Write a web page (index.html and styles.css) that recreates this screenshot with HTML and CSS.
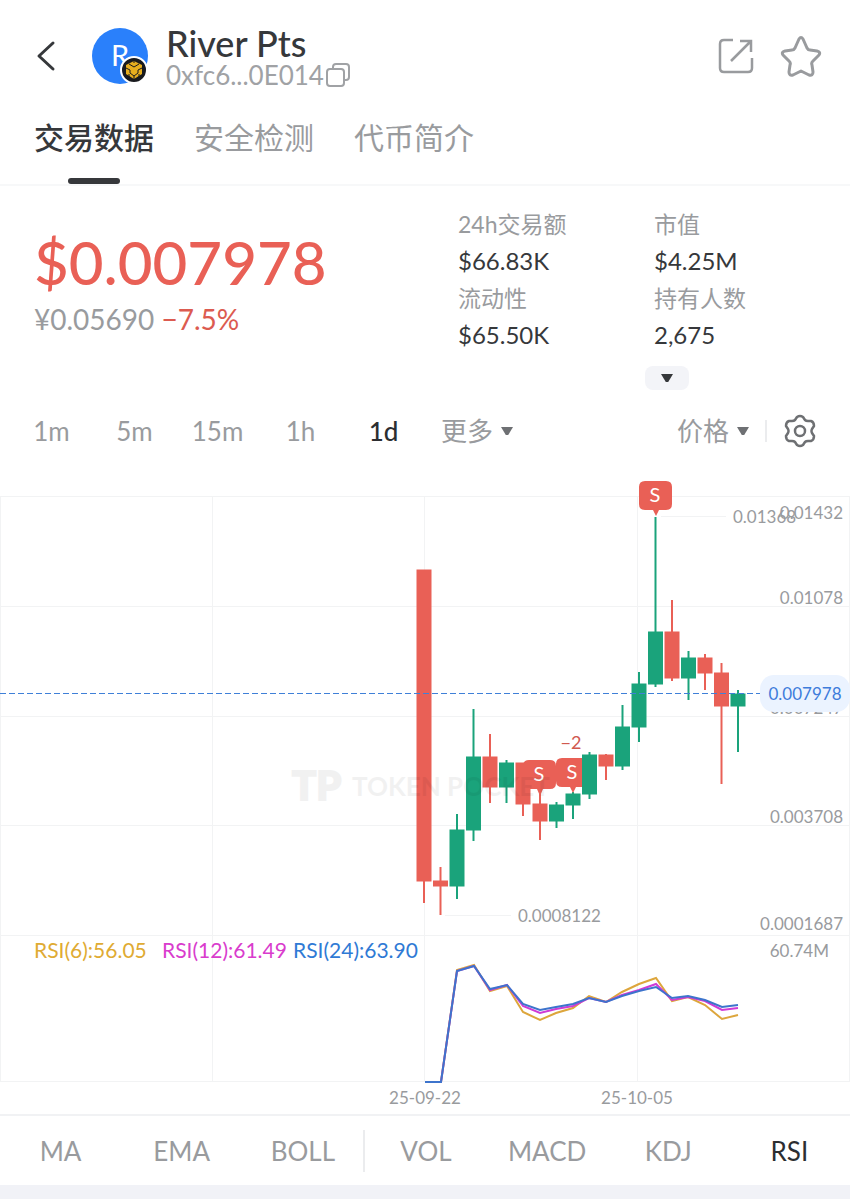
FILE: index.html
```
<!DOCTYPE html>
<html lang="zh-CN">
<head>
    <meta charset="UTF-8">
    <meta name="viewport" content="width=device-width, initial-scale=1.0">
    <title>River Pts</title>
    <link rel="stylesheet" href="styles.css">
</head>
<body>
    <header class="header">
        <button class="icon-btn back" aria-label="返回">
            <svg width="20" height="32" viewBox="0 0 20 32"><path d="M17 3 3 16l14 13" fill="none" stroke="#36383b" stroke-width="3" stroke-linecap="round" stroke-linejoin="round"/></svg>
        </button>
        <div class="avatar">R
            <svg class="chain" width="28" height="28" viewBox="0 0 28 28">
                <circle cx="14" cy="14" r="13" fill="#181a1e" stroke="#fff" stroke-width="2"/>
                <path d="m14 5 8 4v9l-8 5-8-5V9z" fill="#e6ae1e"/>
                <path d="m9 8 5 3 5-3M6 12l4 2v3l4 3 4-3v-3l4-2M14 20v4M9 21v-3M19 21v-3M14 4v3" fill="none" stroke="#181a1e" stroke-width="1"/>
            </svg>
        </div>
        <div class="token">
            <h1>River Pts</h1>
            <div class="address">0xfc6...0E014
                <button class="icon-btn" aria-label="复制">
                    <svg width="24" height="24" viewBox="0 0 24 24" fill="none" stroke="#a0a2a5" stroke-width="2"><rect x="1" y="6" width="17" height="17" rx="3"/><path d="M7 6V4q0-3 3-3h10q3 0 3 3v10q0 3-3 3h-2"/></svg>
                </button>
            </div>
        </div>
        <div class="actions">
            <button class="icon-btn" aria-label="分享">
                <svg width="36" height="36" viewBox="0 0 36 36" fill="none" stroke="#999b9e" stroke-width="2.500"><path d="M15 2H6Q2 2 2 6v24q0 4 4 4h24q4 0 4-4V20M22 3h11v11M33 3 13 23"/></svg>
            </button>
            <button class="icon-btn" aria-label="收藏">
                <svg width="42" height="42" viewBox="0 0 42 42" fill="none" stroke="#999b9e" stroke-width="3" stroke-linejoin="round"><path d="M19 4q2-3 4 0l4 9q1 2 3 2l7 1q4 1 2 4l-6 6q-2 2-1 4l1 7q0 4-4 3l-8-4-8 4q-4 1-4-3l1-7q1-2-1-4l-6-6q-2-3 2-4l7-1q2 0 3-2z"/></svg>
            </button>
        </div>
    </header>

    <nav class="tabs">
        <a href="#" class="active">交易数据</a>
        <a href="#">安全检测</a>
        <a href="#">代币简介</a>
    </nav>

    <section class="summary">
        <div class="price-box">
            <div class="price">$0.007978</div>
            <div class="sub-price">¥0.05690 <span>−7.5%</span></div>
        </div>
        <div class="stats">
            <dl>
                <dt>24h交易额</dt>
                <dd>$66.83K</dd>
                <dt>流动性</dt>
                <dd>$65.50K</dd>
            </dl>
            <dl>
                <dt>市值</dt>
                <dd>$4.25M</dd>
                <dt>持有人数</dt>
                <dd>2,675</dd>
            </dl>
            <button class="expand" aria-label="展开"><i class="caret"></i></button>
        </div>
    </section>

    <div class="periods">
        <button>1m</button>
        <button>5m</button>
        <button>15m</button>
        <button>1h</button>
        <button class="active">1d</button>
        <button class="more">更多<i class="caret"></i></button>
        <button class="type">价格<i class="caret"></i></button>
        <span class="divider"></span>
        <button class="settings" aria-label="设置">
            <svg width="32" height="34" viewBox="0 0 32 34" fill="none" stroke="#6e7073" stroke-width="2.500" stroke-linejoin="round"><path d="M13 3q3-2 6 0l2 3q1 1 3 1l3 0q3 1 3 5l-2 3q-1 2 0 4l2 3q0 4-3 5h-3q-2 0-3 1l-2 3q-3 2-6 0l-2-3q-1-1-3-1H5q-3-1-3-5l2-3q1-2 0-4l-2-3q0-4 3-5h3q2 0 3-1z"/><circle cx="16" cy="17" r="5"/></svg>
        </button>
    </div>

    <svg class="chart" viewBox="0 0 850 640">
        <g class="grid">
            <path d="M0 22.500H850M0 132.500H850M0 242.500H850M0 351.500H850M0 461.500H850M0 607.500H850"/>
            <path d="M.5 22V607M212.500 22V607M424.500 22V607M637.500 22V607M849.500 22V607"/>
            <path d="M661 42.500H726M445 441.500H511"/>
        </g>

        <g class="axis">
            <text x="843" y="45" text-anchor="end">0.01432</text>
            <text x="843" y="130" text-anchor="end">0.01078</text>
            <text x="843" y="240" text-anchor="end">0.007247</text>
            <text x="843" y="349" text-anchor="end">0.003708</text>
            <text x="843" y="456" text-anchor="end">0.0001687</text>
            <text x="829" y="483" text-anchor="end">60.74M</text>
            <text x="733" y="49">0.01368</text>
            <text x="518" y="448">0.0008122</text>
            <text x="425" y="630" text-anchor="middle">25-09-22</text>
            <text x="637" y="630" text-anchor="middle">25-10-05</text>
        </g>

        <!-- candles: wick, then body -->
        <path class="down" d="M424 96V429"/><rect class="down" x="417" y="96" width="14" height="311"/>
        <path class="down" d="M440.500 393V441"/><rect class="down" x="433.500" y="407" width="14" height="5"/>
        <path class="up" d="M457 340V425"/><rect class="up" x="450" y="356" width="14" height="56"/>
        <path class="up" d="M473.500 235V367"/><rect class="up" x="466.500" y="283" width="14" height="73"/>
        <path class="down" d="M490 260V329"/><rect class="down" x="483" y="283" width="14" height="30"/>
        <path class="up" d="M506.500 286V329"/><rect class="up" x="499.500" y="289" width="14" height="24"/>
        <path class="down" d="M523 289V342"/><rect class="down" x="516" y="289" width="14" height="41"/>
        <path class="down" d="M540 320V366"/><rect class="down" x="533" y="330" width="14" height="17"/>
        <path class="up" d="M556.500 328V354"/><rect class="up" x="549.500" y="331" width="14" height="16"/>
        <path class="up" d="M573 318V345"/><rect class="up" x="566" y="320" width="14" height="11"/>

        <!-- sell marks -->
        <g class="mark"><path d="M529 286h21q6 0 6 6v17q0 6-6 6h-7l-3 7-3-7h-8q-6 0-6-6v-17q0-6 6-6z"/><text x="539" y="307">S</text></g>
        <g class="mark"><path d="M562 284h22q6 0 6 6v17q0 6-6 6h-8l-3 6-3-6h-8q-6 0-6-6v-17q0-6 6-6z"/><text x="572" y="305">S</text></g>
        <g class="mark"><path d="M645 7h21q6 0 6 6v17q0 6-6 6h-7l-3 6-3-6h-8q-6 0-6-6V13q0-6 6-6z"/><text x="655" y="28">S</text></g>
        <text class="count" x="571" y="275">−2</text>

        <path class="up" d="M589.500 278V325"/><rect class="up" x="582.500" y="281" width="14" height="39"/>
        <path class="down" d="M606 280V306"/><rect class="down" x="599" y="281" width="14" height="11"/>
        <path class="up" d="M622.500 231V296"/><rect class="up" x="615.500" y="253" width="14" height="39"/>
        <path class="up" d="M639 198V268"/><rect class="up" x="632" y="210" width="14" height="43"/>
        <path class="up" d="M655.500 43V213"/><rect class="up" x="648.500" y="158" width="14" height="52"/>
        <path class="down" d="M672 126V207"/><rect class="down" x="665" y="158" width="14" height="46"/>
        <path class="up" d="M688.500 177V226"/><rect class="up" x="681.500" y="184" width="14" height="20"/>
        <path class="down" d="M705 180V216"/><rect class="down" x="698" y="184" width="14" height="15"/>
        <path class="down" d="M721.500 189V310"/><rect class="down" x="714.500" y="199" width="14" height="33"/>
        <path class="up" d="M738 216V278"/><rect class="up" x="731" y="220" width="14" height="12"/>

        <g class="watermark">
            <text class="tp" x="292" y="326">TP</text>
            <text x="352" y="322">TOKEN POCKET</text>
        </g>

        <path class="current-line" d="M0 219.500H760"/>
        <rect class="current-bg" x="760" y="201" width="90" height="37" rx="14"/>
        <text class="current" x="805" y="226">0.007978</text>

        <g class="legend">
            <text class="rsi6" x="34" y="484">RSI(6):56.05</text>
            <text class="rsi12" x="162" y="484">RSI(12):61.49</text>
            <text class="rsi24" x="293" y="484">RSI(24):63.90</text>
        </g>
        <g class="lines">
            <polyline class="rsi6" points="425,608 441,608 457,496 474,491 490,517 507,512 523,538 540,546 556,539 573,534 589,522 606,528 622,518 639,510 656,504 672,527 688,523 705,531 722,545 738,541"/>
            <polyline class="rsi12" points="425,608 441,608 457,497 474,492 490,516 507,511 523,532 540,539 556,535 573,532 589,524 606,528 622,521 639,516 656,510 672,526 688,523 705,527 722,536 738,534"/>
            <polyline class="rsi24" points="425,608 441,608 457,497 474,492 490,515 507,511 523,530 540,536 556,533 573,530 589,524 606,528 622,522 639,517 656,513 672,524 688,522 705,526 722,533 738,531"/>
        </g>
    </svg>

    <div class="indicators">
        <button>MA</button>
        <button>EMA</button>
        <button>BOLL</button>
        <button class="first-sub">VOL</button>
        <button>MACD</button>
        <button>KDJ</button>
        <button class="active">RSI</button>
    </div>
</body>
</html>
```

FILE: styles.css
```
* {
    box-sizing: border-box;
}

html {
    background: #f1f2f7;
}

body {
    margin: 0;
    font-family: Lato, "Noto Sans CJK SC", sans-serif;
    color: #36383b;
    background: #fff;
}

button {
    padding: 0;
    border: none;
    background: none;
    font: inherit;
    color: inherit;
    cursor: pointer;
}

svg {
    display: block;
}

.icon-btn {
    display: flex;
}

.header {
    display: flex;
    align-items: center;
    height: 112px;
    padding: 0 28px 0 36px;
}

.avatar {
    position: relative;
    width: 56px;
    height: 56px;
    margin: 0 18px 0 36px;
    border-radius: 50%;
    background: #2a80fb;
    color: #fff;
    font-size: 29px;
    line-height: 54px;
    text-align: center;
}

.chain {
    position: absolute;
    right: 0;
    bottom: 0;
}

.token {
    padding-top: 4px;
}

.token h1 {
    margin: 0;
    font-size: 36px;
    font-weight: 500;
    line-height: 34px;
}

.address {
    display: flex;
    align-items: center;
    gap: 2px;
    font-size: 26px;
    line-height: 30px;
    color: #a0a2a5;
}

.actions {
    display: flex;
    align-items: center;
    gap: 26px;
    margin-left: auto;
}

.tabs {
    display: flex;
    gap: 40px;
    height: 74px;
    padding: 0 34px;
    border-bottom: 2px solid #f7f8f9;
}

.tabs a {
    position: relative;
    font-size: 30px;
    line-height: 50px;
    color: #999b9e;
    text-decoration: none;
}

.tabs .active {
    font-weight: 500;
    color: #36383b;
}

.tabs .active::after {
    content: "";
    position: absolute;
    left: 34px;
    bottom: 0;
    width: 52px;
    height: 6px;
    border-radius: 3px;
    background: #36383b;
}

.summary {
    display: flex;
    padding: 20px 34px 0;
}

.price-box {
    flex: 1;
    padding-top: 20px;
}

.price {
    font-size: 60px;
    font-weight: 500;
    line-height: 72px;
    color: #e96056;
}

.sub-price {
    font-size: 28px;
    line-height: 42px;
    color: #999b9e;
}

.sub-price span {
    color: #dc5b50;
}

.stats {
    display: grid;
    grid-template-columns: 196px 162px;
}

.stats dl {
    margin: 0;
}

.stats dt {
    font-size: 23px;
    line-height: 36px;
    color: #999b9e;
}

.stats dd {
    margin: 0;
    font-size: 24px;
    line-height: 38px;
}

.expand {
    grid-column: 1 / -1;
    justify-self: center;
    display: flex;
    align-items: center;
    justify-content: center;
    width: 44px;
    height: 24px;
    margin: 12px 0 0 60px;
    border-radius: 8px;
    background: #f3f4f8;
}

.caret {
    width: 12px;
    height: 8px;
    background: currentColor;
    clip-path: polygon(0 0, 100% 0, 60% 100%, 40% 100%);
}

.periods {
    display: flex;
    align-items: center;
    height: 84px;
    padding: 0 34px 2px 10px;
    font-size: 26px;
    line-height: 36px;
    color: #999b9e;
}

.periods button {
    flex: 0 1 83px;
}

.periods .active {
    font-weight: 500;
    color: #2c2e31;
}

.periods .more, .periods .type {
    display: flex;
    flex: none;
    align-items: center;
    gap: 8px;
}

.periods .more {
    margin-left: 16px;
}

.periods .caret {
    color: #6e7073;
}

.periods .type {
    margin-left: auto;
}

.divider {
    width: 2px;
    height: 22px;
    margin: 0 17px 0 16px;
    background: #ebecee;
}

.periods .settings {
    flex: none;
}

.chart {
    width: 100%;
    height: auto;
    font-size: 17px;
}

.grid {
    fill: none;
    stroke: #f2f3f4;
}

.axis {
    fill: #999b9e;
}

.up {
    fill: #1aa37b;
    stroke: #1aa37b;
}

.down {
    fill: #e96056;
    stroke: #e96056;
}

path.up, path.down {
    stroke-width: 2;
}

.mark {
    fill: #e96056;
    font-size: 20px;
    text-anchor: middle;
}

.mark text {
    fill: #fff;
}

.count {
    fill: #d0594f;
    font-size: 18px;
    text-anchor: middle;
}

.watermark {
    fill: #000;
    opacity: 0.05;
    font-size: 26px;
    font-weight: 700;
}

.watermark .tp {
    font-size: 40px;
    font-weight: 900;
    stroke: #000;
    stroke-width: 2;
}

.current-line {
    fill: none;
    stroke: #3f80d8;
    stroke-dasharray: 6 3;
}

.current-bg {
    fill: #ebf3ff;
}

.current {
    fill: #3e7cdb;
    text-anchor: middle;
}

.legend {
    font-size: 21px;
}

.legend .rsi6 {
    fill: #dfab33;
}

.legend .rsi12 {
    fill: #d93ccd;
}

.legend .rsi24 {
    fill: #2f7ad5;
}

.lines {
    fill: none;
    stroke-width: 2;
}

.lines .rsi6 {
    stroke: #dda63c;
}

.lines .rsi12 {
    stroke: #cf3bd6;
}

.lines .rsi24 {
    stroke: #3d74cc;
}

.indicators {
    display: flex;
    align-items: center;
    height: 71px;
    border-top: 2px solid #f1f2f4;
    font-size: 26px;
    line-height: 42px;
    color: #999b9e;
}

.indicators button {
    flex: 1;
}

.indicators .first-sub {
    border-left: 2px solid #ebecee;
}

.indicators .active {
    color: #2c2e31;
}
```
